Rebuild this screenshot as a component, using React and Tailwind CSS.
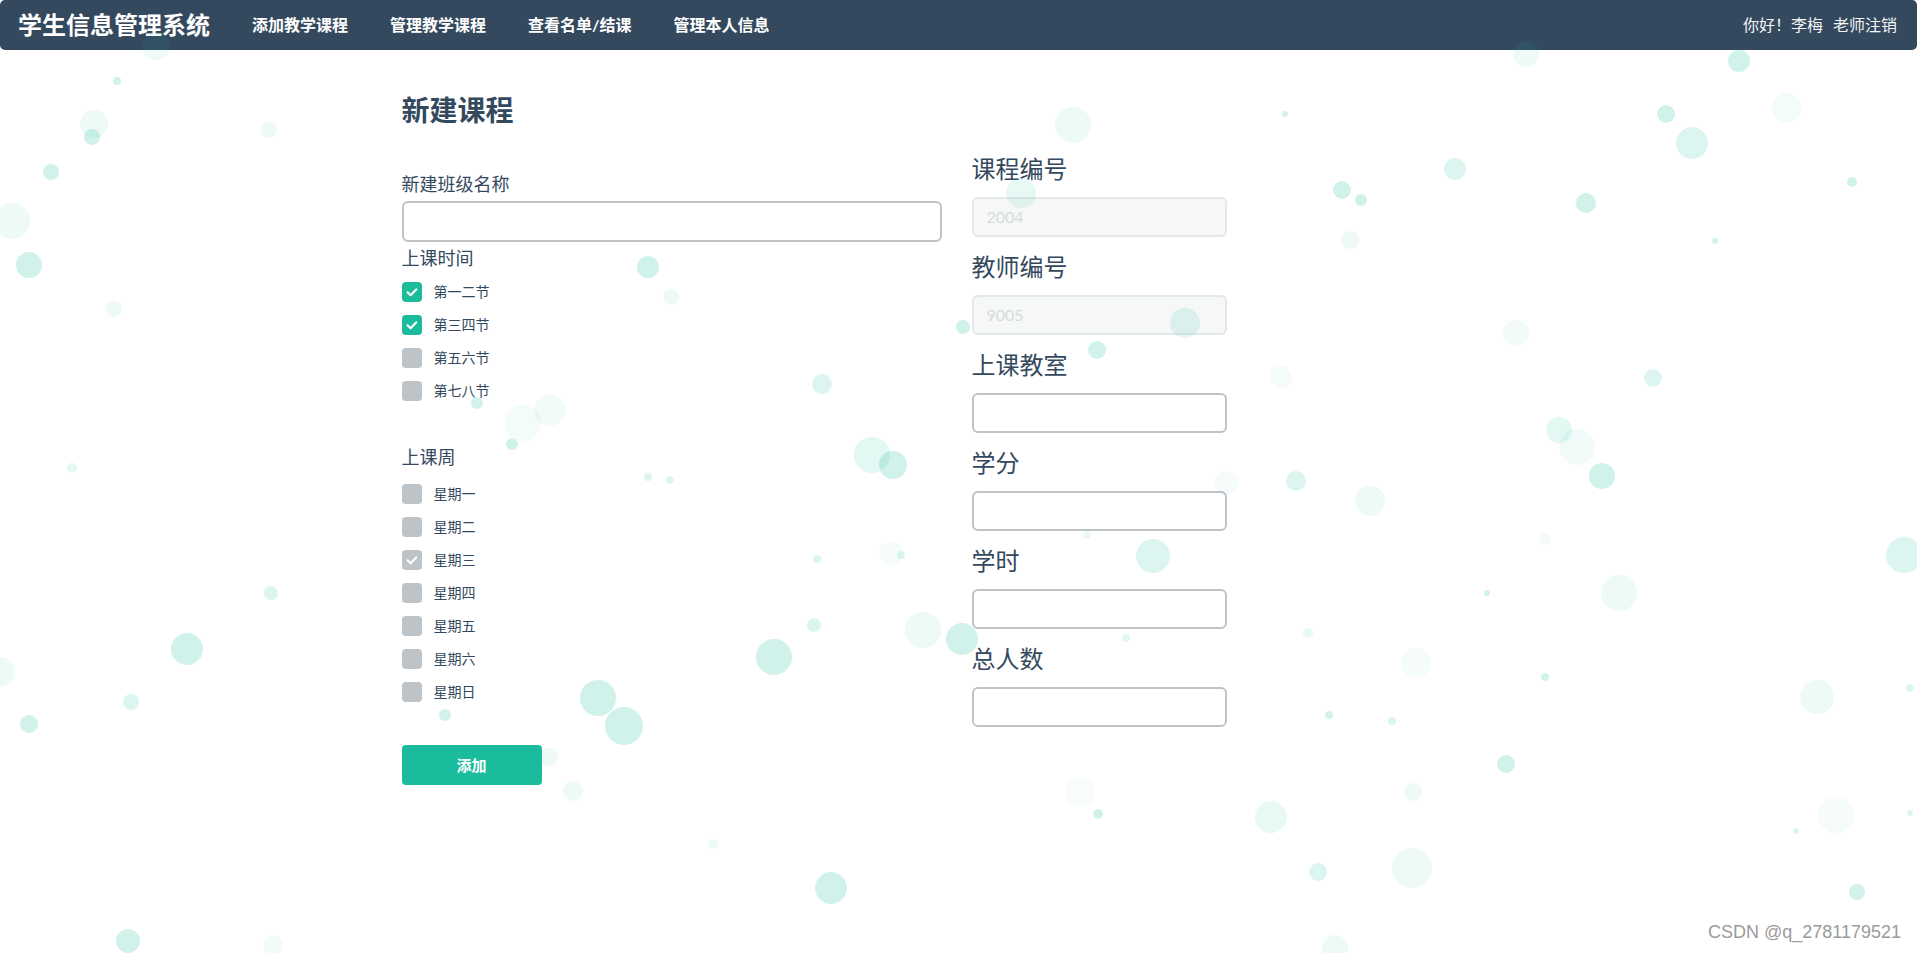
import React from "react";

const FONT = "font-['Lato','Noto_Sans_CJK_SC',sans-serif]";

// decorative particles: [x, y, radius, alpha] in page px
const bubbles = [
  [156, 46, 14, 0.08], [117, 81, 4, 0.2], [94, 124, 14, 0.08], [92, 137, 8, 0.2],
  [269, 130, 8, 0.08], [51, 172, 8, 0.2], [12, 221, 18, 0.08], [29, 265, 13, 0.2],
  [114, 309, 8, 0.08], [648, 267, 11, 0.2], [671, 297, 8, 0.08], [1073, 125, 18, 0.08],
  [1285, 114, 3, 0.2], [1666, 114, 9, 0.2], [1692, 143, 16, 0.15], [1739, 61, 11, 0.2],
  [1526, 54, 13, 0.08], [1787, 108, 15, 0.05], [1455, 169, 11, 0.15], [1342, 190, 9, 0.2],
  [1361, 200, 6, 0.2], [1586, 203, 10, 0.2], [1350, 240, 9, 0.08], [1715, 241, 3, 0.2],
  [1852, 182, 5, 0.2], [1021, 193, 15, 0.1], [1185, 323, 15, 0.12], [1097, 350, 9, 0.2],
  [963, 327, 7, 0.2], [822, 384, 10, 0.15], [1516, 333, 13, 0.06], [1281, 377, 11, 0.05],
  [1653, 378, 9, 0.15], [1559, 430, 13, 0.12], [1577, 447, 18, 0.06], [1602, 476, 13, 0.2],
  [1296, 481, 10, 0.15], [1370, 501, 15, 0.08], [1226, 483, 12, 0.04], [550, 410, 16, 0.06],
  [523, 423, 18, 0.05], [512, 444, 6, 0.2], [477, 403, 6, 0.2], [872, 455, 18, 0.12],
  [893, 465, 14, 0.2], [648, 477, 4, 0.15], [670, 480, 4, 0.15], [72, 468, 5, 0.12],
  [1153, 556, 17, 0.15], [1087, 535, 4, 0.1], [901, 555, 4, 0.15], [891, 553, 12, 0.04],
  [817, 559, 4, 0.15], [1545, 539, 6, 0.06], [1487, 593, 3, 0.2], [1904, 555, 18, 0.15],
  [1619, 593, 18, 0.08], [271, 593, 7, 0.15], [187, 649, 16, 0.2], [0, 672, 15, 0.08],
  [131, 702, 8, 0.15], [29, 724, 9, 0.2], [774, 657, 18, 0.2], [814, 625, 7, 0.15],
  [923, 630, 18, 0.08], [962, 639, 16, 0.2], [598, 698, 18, 0.2], [624, 726, 19, 0.2],
  [445, 715, 6, 0.2], [549, 757, 9, 0.08], [573, 791, 10, 0.08], [1308, 633, 5, 0.1],
  [1126, 638, 4, 0.12], [1416, 663, 15, 0.04], [1545, 677, 4, 0.2], [1817, 697, 17, 0.08],
  [1329, 715, 4, 0.2], [1392, 721, 4, 0.15], [1506, 764, 9, 0.2], [1413, 792, 9, 0.08],
  [1910, 688, 4, 0.15], [1098, 814, 5, 0.2], [1080, 792, 15, 0.03], [1271, 817, 16, 0.1],
  [1318, 872, 9, 0.15], [1412, 868, 20, 0.08], [1836, 815, 18, 0.04], [1796, 831, 3, 0.15],
  [1857, 892, 8, 0.2], [831, 888, 16, 0.2], [713, 844, 5, 0.08], [128, 941, 12, 0.2],
  [273, 945, 10, 0.06], [1335, 948, 13, 0.08], [1910, 813, 3, 0.15],
];

const timeSlots = [
  { label: "第一二节", checked: true },
  { label: "第三四节", checked: true },
  { label: "第五六节", checked: false },
  { label: "第七八节", checked: false },
];

const weekDays = [
  { label: "星期一", checked: false },
  { label: "星期二", checked: false },
  { label: "星期三", checked: false, hint: true },
  { label: "星期四", checked: false },
  { label: "星期五", checked: false },
  { label: "星期六", checked: false },
  { label: "星期日", checked: false },
];

function Check() {
  return (
    <svg width="20" height="20" viewBox="0 0 20 20" fill="none">
      <path
        d="M5.6 10.3l3 2.9 5.6-5.8"
        stroke="#fff"
        strokeWidth="2.2"
        strokeLinecap="round"
        strokeLinejoin="round"
      />
    </svg>
  );
}

function CheckRow({ label, checked, hint }) {
  return (
    <label className="flex h-[20px] items-center">
      <span
        className={
          checked
            ? "flex h-[20px] w-[20px] items-center justify-center rounded-[4px] bg-[#1abc9c]"
            : "flex h-[20px] w-[20px] items-center justify-center rounded-[4px] bg-[#bdc3c7]"
        }
      >
        {(checked || hint) && <Check />}
      </span>
      <span className="ml-[12px] text-[14px] leading-[20px] text-[#34495e]">{label}</span>
    </label>
  );
}

function Field({ label, value, disabled }) {
  return (
    <div className="mb-[12px]">
      <div className="mb-[10px] text-[24px] leading-[36px] text-[#34495e]">{label}</div>
      {disabled ? (
        <div className="flex h-[40px] w-[255px] items-center rounded-[6px] border-2 border-[#e4e8e8] bg-[#f4f6f6]/80 pl-[13px] text-[16px] text-[#d5dbdb]">
          {value}
        </div>
      ) : (
        <div className="h-[40px] w-[255px] rounded-[6px] border-2 border-[#bdc3c7]" />
      )}
    </div>
  );
}

export default function App() {
  return (
    <div className={`relative h-[953px] w-full overflow-hidden bg-white ${FONT}`}>
      {/* navbar */}
      <nav className="flex h-[50px] items-center rounded-[5px] bg-[#34495e] pl-[18px] pr-[20px] text-white">
        <div className="text-[24px] font-bold leading-[50px]">学生信息管理系统</div>
        <div className="ml-[42px] flex gap-[42px] text-[16px] font-bold">
          <span>添加教学课程</span>
          <span>管理教学课程</span>
          <span>查看名单/结课</span>
          <span>管理本人信息</span>
        </div>
        <div className="ml-auto flex text-[16px] text-[#f2f5f5]">
          <span>你好！李梅</span>
          <span className="ml-[10px]">老师注销</span>
        </div>
      </nav>

      <div className="mx-auto w-[1144px] pr-[4px]">
        <h2 className="mt-[43px] px-[15px] text-[28px] font-bold leading-[34px] text-[#34495e]">
          新建课程
        </h2>

        <div className="flex">
          {/* left column */}
          <div className="w-[570px] px-[15px] pt-[44px]">
            <div className="text-[18px] leading-[27px] text-[#34495e]">新建班级名称</div>
            <div className="mt-[3px] h-[41px] w-full rounded-[6px] border-2 border-[#bdc3c7]" />

            <div className="mt-[3px] text-[18px] leading-[27px] text-[#34495e]">上课时间</div>
            <div className="mt-[10px] flex flex-col gap-[13px]">
              {timeSlots.map((s) => (
                <CheckRow key={s.label} {...s} />
              ))}
            </div>

            <div className="mt-[43px] text-[18px] leading-[27px] text-[#34495e]">上课周</div>
            <div className="mt-[13px] flex flex-col gap-[13px]">
              {weekDays.map((d) => (
                <CheckRow key={d.label} {...d} />
              ))}
            </div>

            <button className="mt-[43px] flex h-[40px] w-[140px] items-center justify-center rounded-[4px] bg-[#1abc9c] text-[15px] font-bold text-white">
              添加
            </button>
          </div>

          {/* right column */}
          <div className="w-[570px] px-[15px] pt-[24px]">
            <Field label="课程编号" value="2004" disabled />
            <Field label="教师编号" value="9005" disabled />
            <Field label="上课教室" />
            <Field label="学分" />
            <Field label="学时" />
            <Field label="总人数" />
          </div>
        </div>
      </div>

      {/* particle layer */}
      <div className="pointer-events-none absolute inset-0">
        {bubbles.map(([x, y, r, a], i) => (
          <span
            key={i}
            className="absolute rounded-full"
            style={{
              left: x - r,
              top: y - r,
              width: r * 2,
              height: r * 2,
              backgroundColor: `rgba(26,188,156,${a})`,
            }}
          />
        ))}
      </div>

      <div className="pointer-events-none absolute bottom-[7px] right-[16px] font-['Liberation_Sans',sans-serif] text-[18px] text-[#9b9b9b]">
        CSDN @q_2781179521
      </div>
    </div>
  );
}
